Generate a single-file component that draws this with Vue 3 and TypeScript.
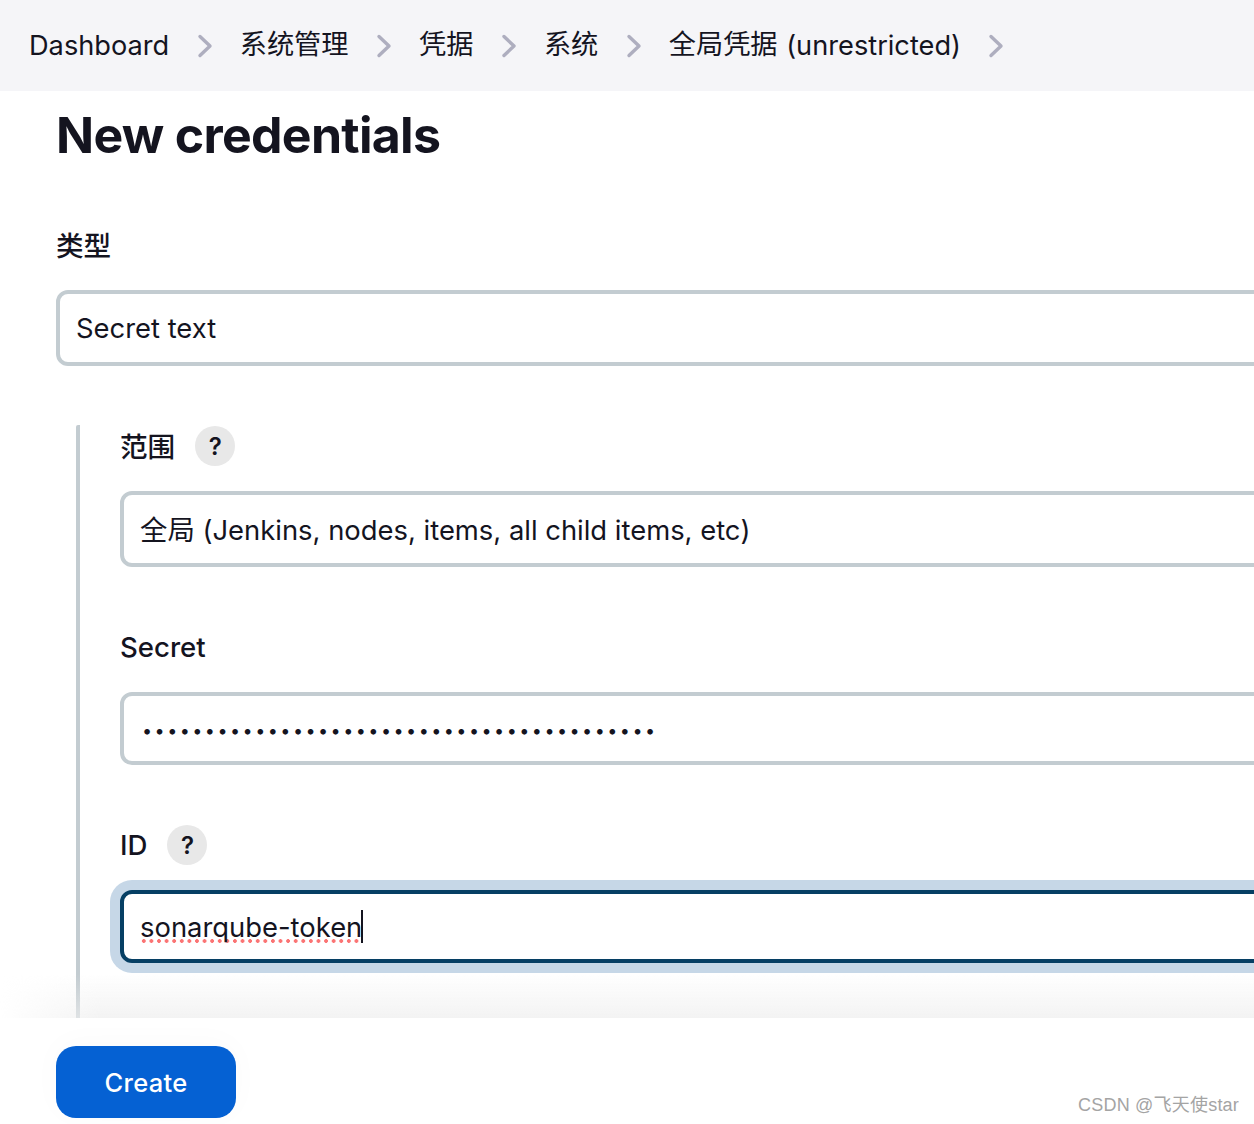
<script setup lang="ts">
interface Crumb {
  zh?: string
  en?: string
}

const crumbs: Crumb[] = [
  { en: 'Dashboard' },
  { zh: '系统管理' },
  { zh: '凭据' },
  { zh: '系统' },
  { zh: '全局凭据', en: ' (unrestricted)' },
]
const secretDots = '•'.repeat(41)
</script>

<template>
  <div class="page">
    <nav class="crumbs">
      <template v-for="(c, i) in crumbs" :key="i">
        <span class="crumb"><span v-if="c.zh" class="zh">{{ c.zh }}</span>{{ c.en }}</span>
        <svg class="chev" width="16" height="26" viewBox="0 0 16 26" fill="none">
          <path d="M3 3.5 L13 13 L3 22.5" stroke="#aeaebf" stroke-width="3.4" stroke-linecap="round" stroke-linejoin="round" />
        </svg>
      </template>
    </nav>

    <main class="content">
      <h1 class="title">New credentials</h1>

      <label class="label kind-label">类型</label>
      <div class="field select kind">Secret text</div>

      <div class="group">
        <div class="label-row">
          <label class="label zh-label">范围</label>
          <span class="help">?</span>
        </div>
        <div class="field select">全局 (Jenkins, nodes, items, all child items, etc)</div>

        <label class="label secret-label">Secret</label>
        <div class="field secret"><span class="dots">{{ secretDots }}</span></div>

        <div class="label-row id-row">
          <label class="label">ID</label>
          <span class="help">?</span>
        </div>
        <div class="field focused">
          <span class="typed">sonarqube-token</span><span class="caret" />
        </div>
      </div>
      <div class="fade" />
    </main>

    <footer class="bar">
      <button class="create" type="button">Create</button>
      <span class="mark">CSDN @飞天使star</span>
    </footer>
  </div>
</template>

<style>
html, body { background: #fff; }
</style>

<style scoped>
.page {
  width: 1254px;
  height: 1124px;
  display: flex;
  flex-direction: column;
  overflow: hidden;
  font-family: Inter, "Noto Sans CJK SC", sans-serif;
  color: #14141f;
  background: #fff;
}

.crumbs {
  height: 91px;
  flex-shrink: 0;
  box-sizing: border-box;
  padding-left: 29px;
  display: flex;
  align-items: center;
  background: #f5f5f8;
}

.crumb {
  font-size: 27.2px;
  line-height: 36px;
  font-weight: 400;
  white-space: pre;
  word-spacing: 1px;
}

.zh { vertical-align: 0.5px; }

.chev {
  margin: 0 27px 0 27.5px;
  flex-shrink: 0;
}

.content {
  flex: 1;
  min-height: 0;
  position: relative;
  padding: 0 0 0 56px;
  overflow: hidden;
}

.title {
  margin: 13px 0 0;
  font-size: 50px;
  line-height: 62px;
  font-weight: 700;
  letter-spacing: -0.7px;
}

.label {
  display: block;
  font-size: 27.6px;
  line-height: 36px;
  font-weight: 500;
}

.kind-label {
  margin-top: 62px;
  padding-bottom: 1px;
}

.field {
  box-sizing: border-box;
  width: 1300px;
  border: 4px solid #c3ccd1;
  border-radius: 12px;
  display: flex;
  align-items: center;
  padding: 0 16px;
  font-size: 27.4px;
  white-space: nowrap;
  background: #fff;
}

.select {
  height: 76px;
  margin-top: 25px;
  padding-bottom: 2px;
}

.kind { padding-bottom: 0; }

.group {
  margin: 59px 0 0 20px;
  border-left: 4px solid #c3ccd1;
  border-top-left-radius: 2px;
  padding: 1px 0 0 40px;
  height: 640px;
}

.label-row {
  display: flex;
  align-items: center;
  gap: 20px;
  height: 40px;
}

.zh-label { padding-top: 2px; }

.help {
  width: 40px;
  height: 40px;
  border-radius: 50%;
  background: #e8e8e8;
  display: flex;
  align-items: center;
  justify-content: center;
  font-size: 24px;
  font-weight: 600;
}

.secret-label { margin-top: 62px; }

.secret {
  height: 73px;
  margin-top: 27px;
}

.dots {
  font-size: 18px;
  letter-spacing: 2.45px;
  padding: 3px 0 0 2px;
}

.id-row { margin-top: 60px; }

.focused {
  height: 73px;
  margin-top: 25px;
  border-color: #063f64;
  box-shadow: 0 0 0 10px #c6d7e7;
}

.typed {
  background: radial-gradient(circle at center, #fb7474 1.9px, transparent 2.1px) 0 calc(100% - 1px) / 7.6px 4px repeat-x;
}

.caret {
  width: 2px;
  height: 33px;
  margin-left: -1px;
  background: #14141f;
}

.fade {
  position: absolute;
  left: 0;
  right: 0;
  bottom: 0;
  height: 44px;
  background: linear-gradient(rgba(240, 240, 240, 0), rgba(240, 240, 240, 0.8));
  -webkit-mask-image: linear-gradient(90deg, transparent, #000 100px);
  mask-image: linear-gradient(90deg, transparent, #000 100px);
  pointer-events: none;
}

.bar {
  height: 106px;
  flex-shrink: 0;
  box-sizing: border-box;
  padding: 28px 15px 0 56px;
  display: flex;
  align-items: flex-start;
  justify-content: space-between;
}

.create {
  width: 180px;
  height: 72px;
  padding: 0;
  border: none;
  border-radius: 20px;
  background: #0561d3;
  color: #fff;
  font-family: inherit;
  font-size: 25.5px;
  font-weight: 550;
  letter-spacing: 0.3px;
  box-shadow: 0 -4px 30px rgba(0, 0, 0, 0.025);
}

.mark {
  margin-top: 44px;
  font-family: "Liberation Sans", "Noto Sans CJK SC", sans-serif;
  font-size: 18px;
  letter-spacing: 0.2px;
  color: #a4a4a4;
}
</style>
